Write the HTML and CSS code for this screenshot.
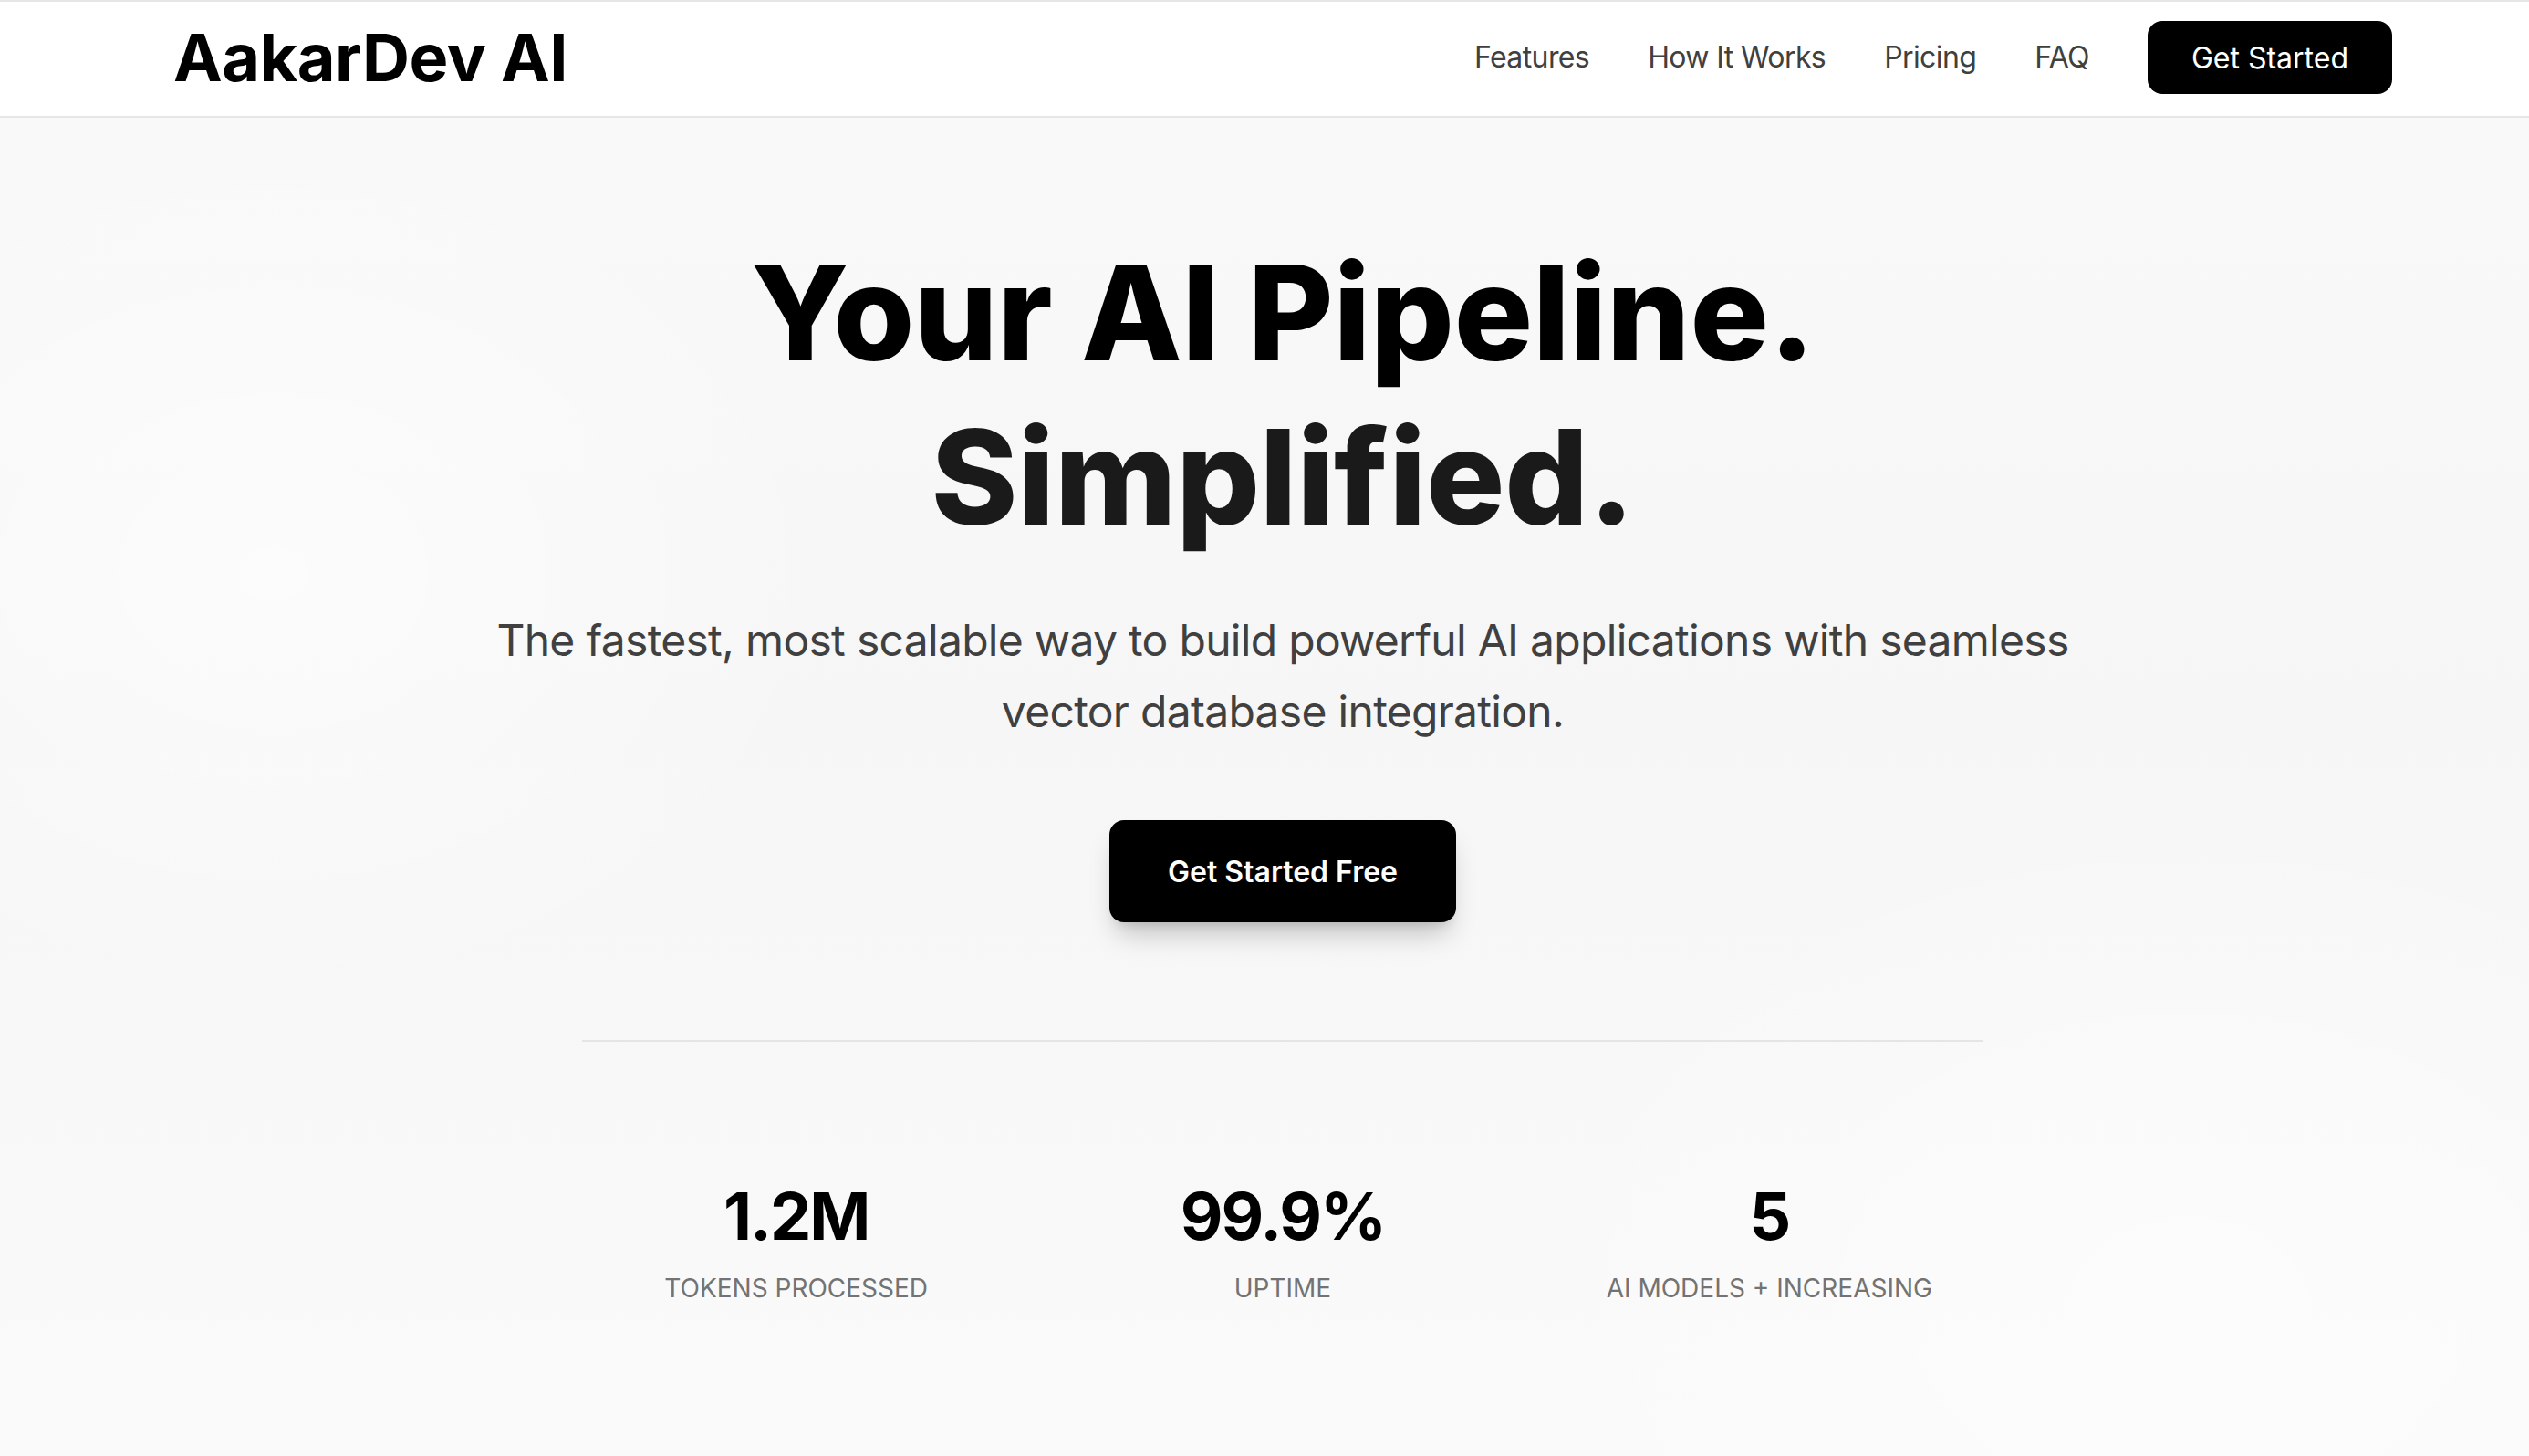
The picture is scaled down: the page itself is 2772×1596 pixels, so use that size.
FILE: index.html
```html
<!DOCTYPE html>
<html lang="en">
<head>
<meta charset="utf-8">
<title>AakarDev AI</title>
<link rel="stylesheet" href="styles.css">
</head>
<body>
<header class="site-header">
  <div class="shell">
    <div class="container nav-row">
      <a class="logo" href="#">AakarDev AI</a>
      <nav class="nav">
        <a class="nav-link" href="#">Features</a>
        <a class="nav-link" href="#">How It Works</a>
        <a class="nav-link" href="#">Pricing</a>
        <a class="nav-link" href="#">FAQ</a>
        <a class="nav-btn" href="#">Get Started</a>
      </nav>
    </div>
  </div>
</header>
<main class="hero">
  <div class="shell">
    <div class="hero-inner">
      <h1 class="headline">Your AI Pipeline.<br><span class="headline-soft">Simplified.</span></h1>
      <p class="lead">The fastest, most scalable way to build powerful AI applications with seamless vector database integration.</p>
      <a class="cta" href="#">Get Started Free</a>
      <hr class="divider">
      <div class="stats">
        <div class="stat">
          <div class="stat-value">1.2M</div>
          <div class="stat-label">Tokens Processed</div>
        </div>
        <div class="stat">
          <div class="stat-value">99.9%</div>
          <div class="stat-label">Uptime</div>
        </div>
        <div class="stat">
          <div class="stat-value">5</div>
          <div class="stat-label">AI Models + Increasing</div>
        </div>
      </div>
    </div>
  </div>
</main>
</body>
</html>
```
FILE: styles.css
```css
* { box-sizing: border-box; }
html, body { margin: 0; padding: 0; }
body {
  font-family: Inter, "Noto Sans", "Liberation Sans", sans-serif;
  color: #000;
  background: #f8f8f8;
  min-height: 1596px;
  -webkit-font-smoothing: antialiased;
}
a { text-decoration: none; color: inherit; }

.shell { padding-left: 40px; }
.container { max-width: 2432px; margin: 0 auto; }

.site-header {
  background: #fff;
  border-top: 2px solid #e6e6e6;
  border-bottom: 2px solid #e6e6e6;
}
.nav-row {
  height: 125px;
  padding-bottom: 3px;
  display: flex;
  align-items: center;
  justify-content: space-between;
}
.logo {
  font-size: 72px;
  font-weight: 700;
  letter-spacing: -0.5px;
  color: #000;
  line-height: 1;
}
.nav {
  display: flex;
  align-items: center;
  gap: 64px;
}
.nav-link {
  font-size: 32px;
  letter-spacing: -0.6px;
  color: #404040;
  line-height: 48px;
}
.nav-btn {
  display: inline-flex;
  align-items: center;
  justify-content: center;
  height: 80px;
  padding: 0 48px;
  background: #000;
  color: #fff;
  font-size: 32px;
  border-radius: 16px;
}

.hero {
  min-height: 1467px;
  background:
    radial-gradient(ellipse 900px 700px at 300px 500px, rgba(255,255,255,0.6), rgba(255,255,255,0) 70%),
    radial-gradient(ellipse 1100px 800px at 2400px 1300px, rgba(255,255,255,0.5), rgba(255,255,255,0) 70%),
    linear-gradient(180deg, #f9f9f9 0%, #f6f6f6 45%, #fafafa 100%);
}
.hero-inner {
  display: flex;
  flex-direction: column;
  align-items: center;
  text-align: center;
  padding-top: 124px;
}
.headline {
  margin: 0;
  font-size: 144px;
  line-height: 180px;
  font-weight: 800;
  letter-spacing: -0.2px;
  color: #000;
}
.headline-soft { color: #1a1a1a; }
.lead {
  margin: 50px 0 0;
  max-width: 1792px;
  font-size: 48px;
  line-height: 78px;
  letter-spacing: -0.7px;
  color: #404040;
}
.cta {
  margin-top: 80px;
  display: inline-flex;
  align-items: center;
  justify-content: center;
  height: 112px;
  padding: 0 64px;
  background: #000;
  color: #fff;
  font-size: 32px;
  font-weight: 600;
  border-radius: 16px;
  box-shadow: 0 20px 30px -8px rgba(0,0,0,0.22), 0 8px 12px -6px rgba(0,0,0,0.12);
}
.divider {
  margin: 129px 0 0;
  width: 1536px;
  height: 2px;
  border: 0;
  background: #e5e5e5;
}
.stats {
  margin-top: 151px;
  width: 1536px;
  display: grid;
  grid-template-columns: repeat(3, 1fr);
  gap: 64px;
}
.stat {
  display: flex;
  flex-direction: column;
  align-items: center;
}
.stat-value {
  font-size: 72px;
  line-height: 80px;
  font-weight: 700;
  letter-spacing: -2px;
  color: #000;
}
.stat-label {
  margin-top: 19px;
  font-size: 28px;
  line-height: 40px;
  text-transform: uppercase;
  letter-spacing: 0;
  color: #737373;
}
```
